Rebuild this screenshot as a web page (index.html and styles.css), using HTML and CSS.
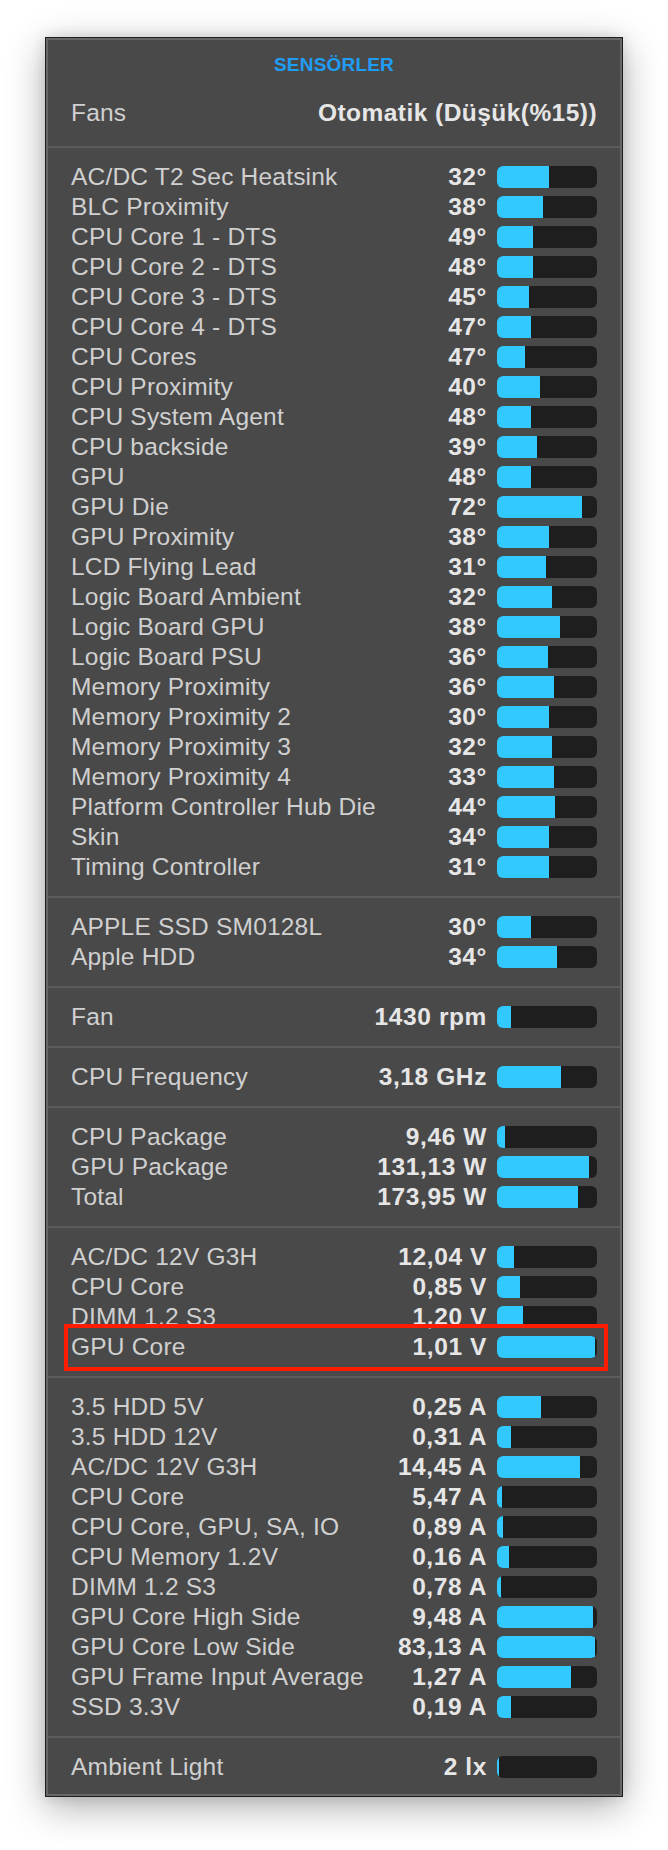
FILE: index.html
```html
<!DOCTYPE html>
<html lang="tr">
<head>
<meta charset="utf-8">
<title>Sensörler</title>
<link rel="stylesheet" href="styles.css">
</head>
<body>
<div class="page">
  <div class="panel">
    <div class="inner">
      <header class="head">
        <div class="title">SENSÖRLER</div>
        <div class="row fans"><span class="label">Fans</span><span class="value">Otomatik (Düşük(%15))</span></div>
      </header>

      <section class="group">
        <div class="row"><span class="label">AC/DC T2 Sec Heatsink</span><span class="value">32°</span><span class="bar"><span class="fill" style="width:52%"></span></span></div>
        <div class="row"><span class="label">BLC Proximity</span><span class="value">38°</span><span class="bar"><span class="fill" style="width:46%"></span></span></div>
        <div class="row"><span class="label">CPU Core 1 - DTS</span><span class="value">49°</span><span class="bar"><span class="fill" style="width:36%"></span></span></div>
        <div class="row"><span class="label">CPU Core 2 - DTS</span><span class="value">48°</span><span class="bar"><span class="fill" style="width:36%"></span></span></div>
        <div class="row"><span class="label">CPU Core 3 - DTS</span><span class="value">45°</span><span class="bar"><span class="fill" style="width:32%"></span></span></div>
        <div class="row"><span class="label">CPU Core 4 - DTS</span><span class="value">47°</span><span class="bar"><span class="fill" style="width:34%"></span></span></div>
        <div class="row"><span class="label">CPU Cores</span><span class="value">47°</span><span class="bar"><span class="fill" style="width:28%"></span></span></div>
        <div class="row"><span class="label">CPU Proximity</span><span class="value">40°</span><span class="bar"><span class="fill" style="width:43%"></span></span></div>
        <div class="row"><span class="label">CPU System Agent</span><span class="value">48°</span><span class="bar"><span class="fill" style="width:34%"></span></span></div>
        <div class="row"><span class="label">CPU backside</span><span class="value">39°</span><span class="bar"><span class="fill" style="width:40%"></span></span></div>
        <div class="row"><span class="label">GPU</span><span class="value">48°</span><span class="bar"><span class="fill" style="width:34%"></span></span></div>
        <div class="row"><span class="label">GPU Die</span><span class="value">72°</span><span class="bar"><span class="fill" style="width:85%"></span></span></div>
        <div class="row"><span class="label">GPU Proximity</span><span class="value">38°</span><span class="bar"><span class="fill" style="width:52%"></span></span></div>
        <div class="row"><span class="label">LCD Flying Lead</span><span class="value">31°</span><span class="bar"><span class="fill" style="width:49%"></span></span></div>
        <div class="row"><span class="label">Logic Board Ambient</span><span class="value">32°</span><span class="bar"><span class="fill" style="width:55%"></span></span></div>
        <div class="row"><span class="label">Logic Board GPU</span><span class="value">38°</span><span class="bar"><span class="fill" style="width:63%"></span></span></div>
        <div class="row"><span class="label">Logic Board PSU</span><span class="value">36°</span><span class="bar"><span class="fill" style="width:51%"></span></span></div>
        <div class="row"><span class="label">Memory Proximity</span><span class="value">36°</span><span class="bar"><span class="fill" style="width:57%"></span></span></div>
        <div class="row"><span class="label">Memory Proximity 2</span><span class="value">30°</span><span class="bar"><span class="fill" style="width:52%"></span></span></div>
        <div class="row"><span class="label">Memory Proximity 3</span><span class="value">32°</span><span class="bar"><span class="fill" style="width:55%"></span></span></div>
        <div class="row"><span class="label">Memory Proximity 4</span><span class="value">33°</span><span class="bar"><span class="fill" style="width:57%"></span></span></div>
        <div class="row"><span class="label">Platform Controller Hub Die</span><span class="value">44°</span><span class="bar"><span class="fill" style="width:58%"></span></span></div>
        <div class="row"><span class="label">Skin</span><span class="value">34°</span><span class="bar"><span class="fill" style="width:52%"></span></span></div>
        <div class="row"><span class="label">Timing Controller</span><span class="value">31°</span><span class="bar"><span class="fill" style="width:52%"></span></span></div>
      </section>

      <section class="group">
        <div class="row"><span class="label">APPLE SSD SM0128L</span><span class="value">30°</span><span class="bar"><span class="fill" style="width:34%"></span></span></div>
        <div class="row"><span class="label">Apple HDD</span><span class="value">34°</span><span class="bar"><span class="fill" style="width:60%"></span></span></div>
      </section>

      <section class="group">
        <div class="row"><span class="label">Fan</span><span class="value">1430 rpm</span><span class="bar"><span class="fill" style="width:14%"></span></span></div>
      </section>

      <section class="group">
        <div class="row"><span class="label">CPU Frequency</span><span class="value">3,18 GHz</span><span class="bar"><span class="fill" style="width:64%"></span></span></div>
      </section>

      <section class="group">
        <div class="row"><span class="label">CPU Package</span><span class="value">9,46 W</span><span class="bar"><span class="fill" style="width:8%"></span></span></div>
        <div class="row"><span class="label">GPU Package</span><span class="value">131,13 W</span><span class="bar"><span class="fill" style="width:92%"></span></span></div>
        <div class="row"><span class="label">Total</span><span class="value">173,95 W</span><span class="bar"><span class="fill" style="width:81%"></span></span></div>
      </section>

      <section class="group">
        <div class="row"><span class="label">AC/DC 12V G3H</span><span class="value">12,04 V</span><span class="bar"><span class="fill" style="width:17%"></span></span></div>
        <div class="row"><span class="label">CPU Core</span><span class="value">0,85 V</span><span class="bar"><span class="fill" style="width:23%"></span></span></div>
        <div class="row"><span class="label">DIMM 1.2 S3</span><span class="value">1,20 V</span><span class="bar"><span class="fill" style="width:26%"></span></span></div>
        <div class="row highlight"><span class="label">GPU Core</span><span class="value">1,01 V</span><span class="bar"><span class="fill" style="width:98%"></span></span></div>
      </section>

      <section class="group">
        <div class="row"><span class="label">3.5 HDD 5V</span><span class="value">0,25 A</span><span class="bar"><span class="fill" style="width:44%"></span></span></div>
        <div class="row"><span class="label">3.5 HDD 12V</span><span class="value">0,31 A</span><span class="bar"><span class="fill" style="width:14%"></span></span></div>
        <div class="row"><span class="label">AC/DC 12V G3H</span><span class="value">14,45 A</span><span class="bar"><span class="fill" style="width:83%"></span></span></div>
        <div class="row"><span class="label">CPU Core</span><span class="value">5,47 A</span><span class="bar"><span class="fill" style="width:5%"></span></span></div>
        <div class="row"><span class="label">CPU Core, GPU, SA, IO</span><span class="value">0,89 A</span><span class="bar"><span class="fill" style="width:6%"></span></span></div>
        <div class="row"><span class="label">CPU Memory 1.2V</span><span class="value">0,16 A</span><span class="bar"><span class="fill" style="width:12%"></span></span></div>
        <div class="row"><span class="label">DIMM 1.2 S3</span><span class="value">0,78 A</span><span class="bar"><span class="fill" style="width:4%"></span></span></div>
        <div class="row"><span class="label">GPU Core High Side</span><span class="value">9,48 A</span><span class="bar"><span class="fill" style="width:96%"></span></span></div>
        <div class="row"><span class="label">GPU Core Low Side</span><span class="value">83,13 A</span><span class="bar"><span class="fill" style="width:98%"></span></span></div>
        <div class="row"><span class="label">GPU Frame Input Average</span><span class="value">1,27 A</span><span class="bar"><span class="fill" style="width:74%"></span></span></div>
        <div class="row"><span class="label">SSD 3.3V</span><span class="value">0,19 A</span><span class="bar"><span class="fill" style="width:14%"></span></span></div>
      </section>

      <section class="group last">
        <div class="row"><span class="label">Ambient Light</span><span class="value">2 lx</span><span class="bar"><span class="fill" style="width:2%"></span></span></div>
      </section>
    </div>
  </div>
</div>
</body>
</html>
```

FILE: styles.css
```css
html, body {
  margin: 0;
  padding: 0;
  background: #ffffff;
}

body {
  font-family: "Liberation Sans", Arial, sans-serif;
}

.page {
  padding: 37px 45px 53px;
}

.panel {
  border: 1px solid #1f1f1f;
  background: #494949;
  box-shadow: 0 10px 36px rgba(0, 0, 0, 0.32), 0 0 12px rgba(0, 0, 0, 0.12);
}

.inner {
  border: 2px solid #676767;
}

.head {
  padding: 10px 23px 18px;
}

.title {
  height: 30px;
  line-height: 30px;
  text-align: center;
  font-size: 19px;
  font-weight: 700;
  letter-spacing: 0.2px;
  color: #1f9df5;
  margin-bottom: 18px;
}

.group {
  border-top: 2px solid #5b5b5b;
  padding: 14px 23px;
}

.group.last {
  padding-bottom: 12px;
}

.row {
  display: flex;
  align-items: center;
  height: 30px;
  font-size: 24.5px;
  line-height: 30px;
  white-space: nowrap;
}

.label {
  flex: 1;
  color: #d0d0d0;
  letter-spacing: 0.2px;
}

.value {
  font-weight: 700;
  color: #e6e6e6;
  letter-spacing: 0.6px;
  margin-right: 10px;
}

.fans .value {
  margin-right: 0;
  letter-spacing: 0.45px;
}

.bar {
  display: block;
  width: 100px;
  height: 22px;
  border-radius: 6px;
  background: #1e1e1e;
  overflow: hidden;
  flex: none;
}

.fill {
  display: block;
  height: 100%;
  background: #31c9ff;
}

.highlight {
  position: relative;
}

.highlight::after {
  content: "";
  position: absolute;
  top: -8px;
  bottom: -9px;
  left: -7px;
  right: -11px;
  border: 4px solid #ff1c00;
}
```
